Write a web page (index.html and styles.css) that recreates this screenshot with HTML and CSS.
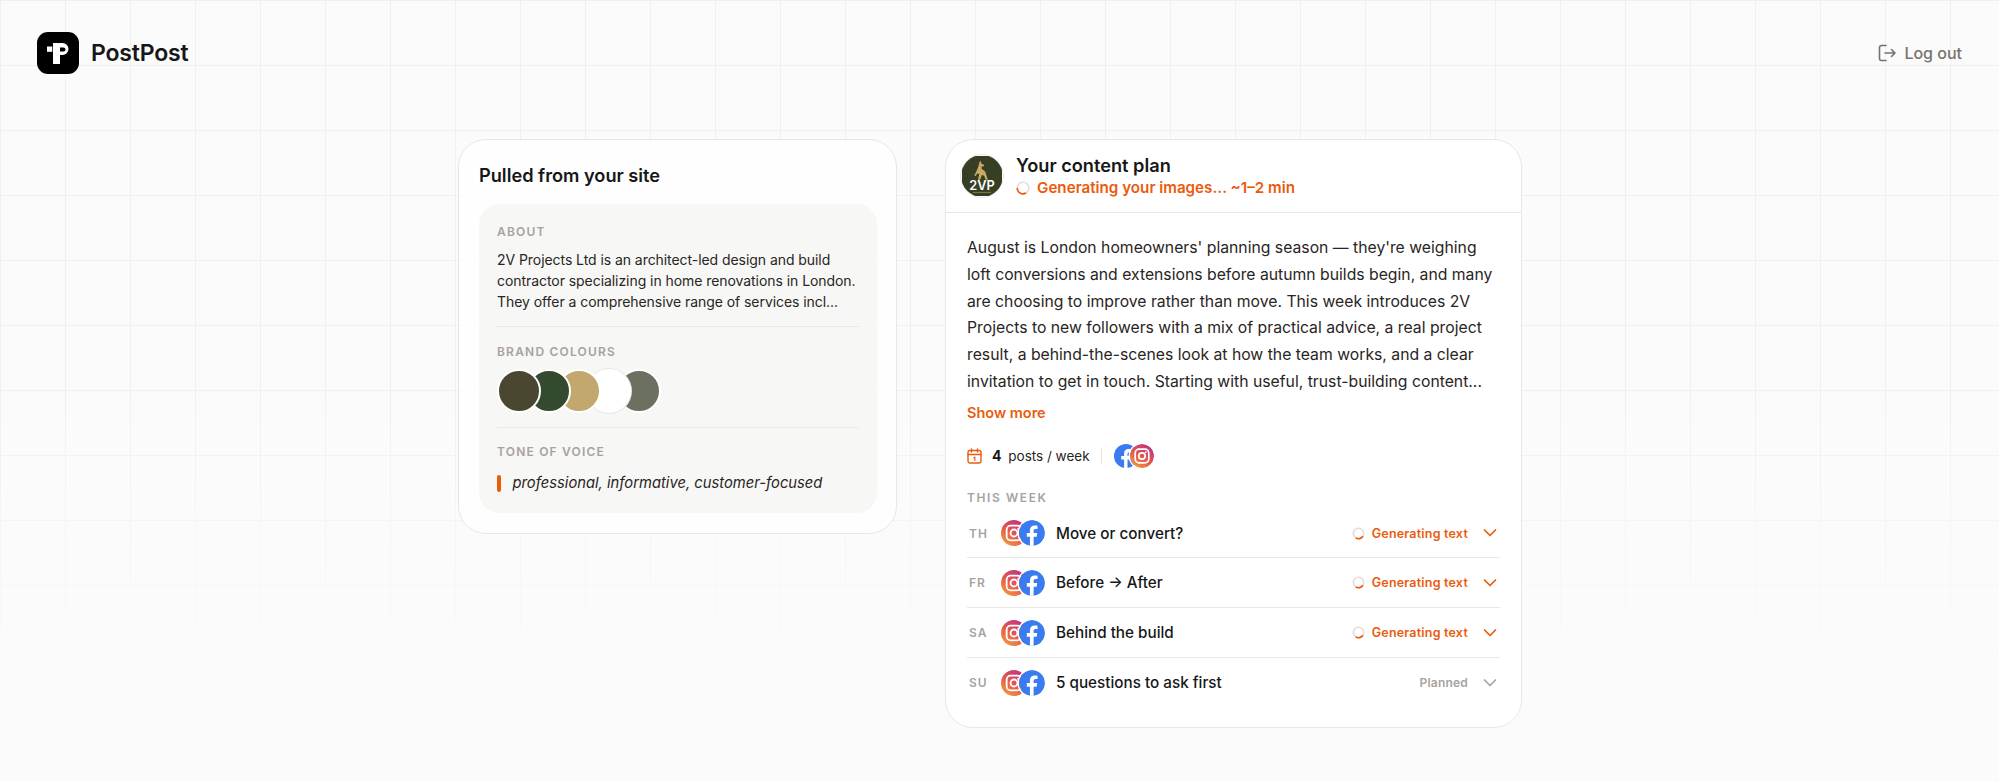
FILE: index.html
```html
<!DOCTYPE html>
<html lang="en">
<head>
    <meta charset="UTF-8">
    <title>PostPost</title>
    <link rel="stylesheet" href="styles.css">
</head>
<body>
    <svg class="sprites" width="0" height="0">
        <defs>
            <linearGradient id="ig" x1="0.1" y1="1" x2="0.8" y2="0">
                <stop offset="0" stop-color="#f6a03c"/>
                <stop offset="0.5" stop-color="#e2574f"/>
                <stop offset="1" stop-color="#bd2f8c"/>
            </linearGradient>
            <symbol id="icon-ig" viewBox="0 0 24 24">
                <circle cx="12" cy="12" r="12" fill="url(#ig)"/>
                <rect x="5.200" y="5.200" width="13.600" height="13.600" rx="3.800" fill="none" stroke="#fff" stroke-width="1.700"/>
                <circle cx="12" cy="12" r="3.200" fill="none" stroke="#fff" stroke-width="1.700"/>
                <circle cx="15.800" cy="8.200" r="0.900" fill="#fff"/>
            </symbol>
            <symbol id="icon-fb" viewBox="0 0 24 24">
                <circle cx="12" cy="12" r="12" fill="#3b7bf0"/>
                <path d="M10.100 24v-8.600H7.200V12h2.900V9.500c0-2.900 1.700-4.500 4.400-4.500 1.300 0 2.300.2 2.600.2v3h-1.800c-1.400 0-1.800.9-1.800 1.800V12h3.300l-.5 3.400h-2.800V24z" fill="#fff"/>
            </symbol>
            <symbol id="icon-spin" viewBox="0 0 14 14">
                <circle cx="7" cy="7" r="5.800" fill="none" stroke="#dfdedc" stroke-width="1.500"/>
                <path d="M1.200 7A5.800 5.800 0 0 0 10 12" fill="none" stroke="#ea5b0c" stroke-width="1.600"/>
            </symbol>
            <symbol id="icon-spin-small" viewBox="0 0 14 14">
                <circle cx="7" cy="7" r="5.600" fill="none" stroke="#dfdedc" stroke-width="1.700"/>
                <path d="M4 11.700A5.600 5.600 0 0 0 11.800 10" fill="none" stroke="#ea5b0c" stroke-width="1.800"/>
            </symbol>
            <symbol id="icon-chev" viewBox="0 0 14 10">
                <path d="M1.500 2l5.500 5.500L12.500 2" fill="none" stroke="currentColor" stroke-width="1.700" stroke-linecap="round" stroke-linejoin="round"/>
            </symbol>
        </defs>
    </svg>

    <header class="topbar">
        <div class="brand">
            <svg class="brand-mark" width="42" height="42" viewBox="0 0 42 42">
                <rect width="42" height="42" rx="11" fill="#000"/>
                <path d="M16 11h9.500a6 6 0 0 1 0 12H23v9h-7zM23 15.500v4h3.500a2 2 0 0 0 0-4z" fill="#fff" fill-rule="evenodd"/>
                <rect x="10" y="14.500" width="5.300" height="5.300" fill="#fff"/>
            </svg>
            <span class="brand-name">PostPost</span>
        </div>
        <a class="logout" href="#">
            <svg width="20" height="20" viewBox="0 0 20 20" fill="none" stroke="#78716c" stroke-width="1.600" stroke-linecap="round" stroke-linejoin="round"><path d="M9 2.500H4.500a2 2 0 0 0-2 2v11a2 2 0 0 0 2 2H9M8 10h10M14.500 6.500L18 10l-3.500 3.500"/></svg>
            Log out
        </a>
    </header>

    <main class="columns">
        <section class="card site-card">
            <h2 class="site-title">Pulled from your site</h2>
            <div class="site-box">
                <div class="site-part about-part">
                    <div class="label">About</div>
                    <p class="about-text">2V Projects Ltd is an architect-led design and build contractor specializing in home renovations in London. They offer a comprehensive range of services incl...</p>
                </div>
                <div class="site-part">
                    <div class="label">Brand colours</div>
                    <div class="swatches">
                        <span class="swatch swatch-1"></span>
                        <span class="swatch swatch-2"></span>
                        <span class="swatch swatch-3"></span>
                        <span class="swatch swatch-4"></span>
                        <span class="swatch swatch-5"></span>
                    </div>
                </div>
                <div class="site-part">
                    <div class="label">Tone of voice</div>
                    <div class="tone">
                        <span class="tone-bar"></span>
                        <p class="tone-text">professional, informative, customer-focused</p>
                    </div>
                </div>
            </div>
        </section>

        <section class="card plan-card">
            <div class="plan-head">
                <span class="avatar">
                    <svg width="40" height="40" viewBox="0 0 44 44">
                        <rect width="44" height="44" rx="9" fill="#363f24"/>
                        <path d="M20 5l1.500 3.500 3 1.500-.5 1.500-2-.5-.5 3 4 3 1.500 5 1.500 4h-2.500l-1.500-4-2.500-1.500-2 5.500h-2.500l1.500-6-2-1-2 3-1.500-.5 2.500-5 2-5 1-4z" fill="#c9a962"/>
                        <text class="avatar-text" x="22" y="37" text-anchor="middle">2VP</text>
                        <rect x="12" y="39.500" width="20" height="1" fill="#8d8250"/>
                    </svg>
                </span>
                <div class="plan-heading">
                    <h2 class="plan-title">Your content plan</h2>
                    <div class="plan-status">
                        <svg class="spin" width="14" height="14"><use href="#icon-spin"/></svg>
                        Generating your images... ~1–2 min
                    </div>
                </div>
            </div>

            <div class="plan-body">
                <p class="summary">August is London homeowners' planning season — they're weighing loft conversions and extensions before autumn builds begin, and many are choosing to improve rather than move. This week introduces 2V Projects to new followers with a mix of practical advice, a real project result, a behind-the-scenes look at how the team works, and a clear invitation to get in touch. Starting with useful, trust-building content...</p>
                <a class="show-more" href="#">Show more</a>

                <div class="meta">
                    <svg width="15" height="16" viewBox="0 0 15 16" fill="none" stroke="#ea5b0c" stroke-width="1.400" stroke-linecap="round"><rect x="1" y="2.500" width="13" height="12.500" rx="2"/><path d="M1 6.500h13M4.500 1v3M10.500 1v3"/><path d="M6.800 9.700l1-.5v3.300" stroke-width="1.200"/></svg>
                    <span class="meta-count"><strong>4</strong> posts / week</span>
                    <span class="meta-sep"></span>
                    <span class="meta-icons">
                        <svg class="mini-fb" width="24" height="24"><use href="#icon-fb"/></svg>
                        <svg class="mini-ig" width="24" height="24"><use href="#icon-ig"/></svg>
                    </span>
                </div>

                <div class="label week-label">This week</div>
                <ul class="posts">
                    <li class="post">
                        <span class="day">TH</span>
                        <span class="post-icons"><svg width="26" height="26"><use href="#icon-ig"/></svg><svg class="fb-over" width="26" height="26"><use href="#icon-fb"/></svg></span>
                        <span class="post-title">Move or convert?</span>
                        <span class="post-state active"><svg class="spin" width="13" height="13"><use href="#icon-spin-small"/></svg>Generating text</span>
                        <svg class="chev active" width="14" height="10"><use href="#icon-chev"/></svg>
                    </li>
                    <li class="post">
                        <span class="day">FR</span>
                        <span class="post-icons"><svg width="26" height="26"><use href="#icon-ig"/></svg><svg class="fb-over" width="26" height="26"><use href="#icon-fb"/></svg></span>
                        <span class="post-title">Before → After</span>
                        <span class="post-state active"><svg class="spin" width="13" height="13"><use href="#icon-spin-small"/></svg>Generating text</span>
                        <svg class="chev active" width="14" height="10"><use href="#icon-chev"/></svg>
                    </li>
                    <li class="post">
                        <span class="day">SA</span>
                        <span class="post-icons"><svg width="26" height="26"><use href="#icon-ig"/></svg><svg class="fb-over" width="26" height="26"><use href="#icon-fb"/></svg></span>
                        <span class="post-title">Behind the build</span>
                        <span class="post-state active"><svg class="spin" width="13" height="13"><use href="#icon-spin-small"/></svg>Generating text</span>
                        <svg class="chev active" width="14" height="10"><use href="#icon-chev"/></svg>
                    </li>
                    <li class="post">
                        <span class="day">SU</span>
                        <span class="post-icons"><svg width="26" height="26"><use href="#icon-ig"/></svg><svg class="fb-over" width="26" height="26"><use href="#icon-fb"/></svg></span>
                        <span class="post-title">5 questions to ask first</span>
                        <span class="post-state">Planned</span>
                        <svg class="chev" width="14" height="10"><use href="#icon-chev"/></svg>
                    </li>
                </ul>
            </div>
        </section>
    </main>
</body>
</html>
```

FILE: styles.css
```css
* {
    box-sizing: border-box;
}
html, body {
    height: 100%;
}
body {
    margin: 0;
    overflow: hidden;
    color: #1c1917;
    font-family: Inter, "Liberation Sans", sans-serif;
    background-color: #fbfbfb;
    background-image:
        linear-gradient(to bottom, rgba(251, 251, 251, 0) 50%, #fbfbfb 88%),
        linear-gradient(to right, #f0f0f0 1px, transparent 1px),
        linear-gradient(to bottom, #f0f0f0 1px, transparent 1px);
    background-size: 100% 100%, 65px 65px, 65px 65px;
}
.sprites {
    display: block;
    height: 0;
}
.topbar {
    display: flex;
    justify-content: space-between;
    align-items: center;
    height: 42px;
    margin: 32px 37px 0;
}
.brand {
    display: flex;
    align-items: center;
    gap: 12px;
}
.brand-mark {
    display: block;
}
.brand-name {
    font-size: 23px;
    font-weight: 600;
    letter-spacing: -0.2px;
    color: #171717;
}
.logout {
    display: flex;
    align-items: center;
    gap: 7px;
    font-size: 16px;
    font-weight: 500;
    color: #78716c;
    text-decoration: none;
}
.columns {
    display: flex;
    align-items: flex-start;
    gap: 48px;
    margin: 65px 0 0 458px;
}
.card {
    border: 1px solid #e7e7e6;
    border-radius: 28px;
    background: #fff;
}
.site-card {
    width: 439px;
    padding: 24px 19px 20px 20px;
    background: rgba(255, 255, 255, 0.8);
}
.site-title {
    margin: 0 0 18px;
    font-size: 18.200px;
    line-height: 22px;
    font-weight: 600;
    color: #171717;
}
.site-box {
    padding: 21px 18px 20px;
    border-radius: 20px;
    background: #f7f7f5;
}
.site-part {
    padding-bottom: 14px;
    border-bottom: 1px solid #e9e8e6;
    margin-bottom: 17px;
}
.about-part {
    margin-bottom: 18px;
}
.site-part:last-child {
    padding-bottom: 0;
    border-bottom: 0;
    margin-bottom: 0;
}
.label {
    font-size: 12px;
    line-height: 14px;
    font-weight: 600;
    letter-spacing: 1.200px;
    text-transform: uppercase;
    color: #a8a29e;
}
.about-text {
    margin: 10px 0 0;
    font-size: 14px;
    line-height: 21px;
    letter-spacing: -0.060px;
    color: #292524;
}
.swatches {
    display: flex;
    margin-top: 10px;
}
.swatch {
    position: relative;
    width: 44px;
    height: 44px;
    margin-right: -14px;
    border: 2px solid #fff;
    border-radius: 50%;
}
.swatch-1 { background: #4a4730; z-index: 5; }
.swatch-2 { background: #344a2f; z-index: 4; }
.swatch-3 { background: #c2a76e; z-index: 3; }
.swatch-4 { background: #fff; z-index: 2; box-shadow: 0 0 0 1px #e7e7e6; }
.swatch-5 { background: #6c7060; z-index: 1; }
.tone {
    display: flex;
    align-items: center;
    gap: 12px;
    margin-top: 14px;
}
.tone-bar {
    width: 3.500px;
    height: 17px;
    border-radius: 2px;
    background: #ea5b0c;
}
.tone-text {
    margin: 0;
    font-size: 14.750px;
    line-height: 20px;
    font-style: italic;
    color: #292524;
}
.plan-card {
    width: 577px;
}
.plan-head {
    display: flex;
    align-items: center;
    gap: 12px;
    height: 73px;
    padding: 0 14px;
    border-bottom: 1px solid #e7e7e6;
}
.avatar {
    display: flex;
    align-items: center;
    justify-content: center;
    flex: none;
    width: 44px;
    height: 44px;
    border: 1px solid #ececeb;
    border-radius: 50%;
    overflow: hidden;
}
.avatar-text {
    font-size: 14px;
    font-weight: 600;
    fill: #fff;
}
.plan-heading {
    padding-bottom: 1px;
}
.plan-title {
    margin: 0;
    font-size: 18.200px;
    line-height: 22px;
    font-weight: 600;
    color: #171717;
}
.plan-status {
    display: flex;
    align-items: center;
    gap: 7px;
    margin-top: 2px;
    font-size: 15.200px;
    line-height: 20px;
    font-weight: 600;
    color: #ea5b0c;
}
.plan-body {
    padding: 22px 21px 19px;
}
.summary {
    margin: 0;
    font-size: 15.750px;
    line-height: 26.800px;
    color: #292524;
}
.show-more {
    display: block;
    margin-top: 7px;
    font-size: 14.500px;
    line-height: 20px;
    font-weight: 600;
    color: #ea5b0c;
    text-decoration: none;
}
.meta {
    display: flex;
    align-items: center;
    margin-top: 21px;
    height: 24px;
}
.meta-count {
    margin-left: 10px;
    font-size: 13.500px;
    color: #292524;
}
.meta-count strong {
    margin-right: 3px;
    font-size: 14px;
    font-weight: 700;
    color: #171717;
}
.meta-sep {
    width: 1px;
    height: 16px;
    margin: 0 12px 0 11px;
    background: #e7e7e6;
}
.meta-icons {
    display: flex;
}
.meta-icons svg {
    display: block;
}
.mini-ig {
    margin-left: -8px;
    border-radius: 50%;
    box-shadow: 0 0 0 1.500px #fff;
}
.week-label {
    margin-top: 23px;
    letter-spacing: 1.600px;
}
.posts {
    margin: 4px 0 0;
    padding: 0;
    list-style: none;
}
.post {
    display: flex;
    align-items: center;
    height: 49.700px;
    border-bottom: 1px solid #e9e8e6;
}
.post:last-child {
    border-bottom: 0;
}
.day {
    width: 34px;
    padding-left: 2px;
    font-size: 12px;
    font-weight: 600;
    letter-spacing: 1px;
    color: #a8a29e;
}
.post-icons {
    display: flex;
    margin-right: 11px;
}
.post-icons svg {
    display: block;
}
.fb-over {
    margin-left: -8px;
    border-radius: 50%;
    box-shadow: 0 0 0 1.500px #fff;
}
.post-title {
    flex: 1;
    font-size: 15.250px;
    font-weight: 500;
    color: #171717;
}
.post-state {
    display: flex;
    align-items: center;
    gap: 7px;
    font-size: 12px;
    font-weight: 600;
    letter-spacing: 0.200px;
    color: #a8a29e;
}
.post-state.active {
    font-size: 12.500px;
    color: #ea5b0c;
}
.chev {
    margin: 0 3px 0 15px;
    color: #a8a29e;
}
.chev.active {
    color: #ea5b0c;
}
```
